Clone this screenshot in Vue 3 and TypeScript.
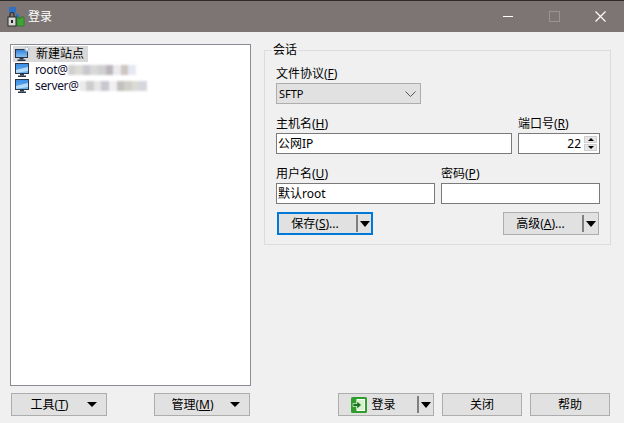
<script setup lang="ts">
const sites = [
  { name: 'root@', blur: ['#d0d0d0', '#dcdcd6', '#c8c8ce', '#d8d8d8', '#d0d0d0', '#bcb6bc', '#ebebee', '#cdc6c2', '#e6e9f3'] },
  { name: 'server@', blur: ['#ebebeb', '#cfcccc', '#e6e6e6', '#c8c8d0', '#f0f0f0', '#c4c0c0', '#d0d0c8', '#dadad6', '#d6d6de'] }
]
</script>

<template>
  <div class="window">
    <header class="titlebar">
      <svg class="app-icon" width="18" height="20" viewBox="0 0 18 20">
        <rect x="2" y="0" width="7" height="6" fill="#2f6fc4" />
        <path d="M9 6 L13 9 L9 12 Z" fill="#2f6fc4" />
        <path d="M10 10 h2 v2 l2 -1 v-1 h3 v9 h-7 Z" fill="#3fa535" stroke="#1d6e1a" stroke-width="0.6" />
        <rect x="1" y="10" width="8" height="9" fill="#d8d8d8" stroke="#2b2b2b" />
        <path d="M3 10 V7.5 a2 2 0 0 1 4 0 V10" fill="none" stroke="#2b2b2b" stroke-width="1.2" />
        <rect x="4" y="13" width="2" height="3" fill="#222" />
      </svg>
      <span class="title">登录</span>
      <div class="window-controls">
        <span class="ctl"><i class="min"></i></span>
        <span class="ctl"><i class="max"></i></span>
        <span class="ctl">
          <svg width="11" height="11" viewBox="0 0 11 11"><path d="M.5 .5 L10.5 10.5 M10.5 .5 L.5 10.5" stroke="#fff" stroke-width="1.2" /></svg>
        </span>
      </div>
    </header>

    <main class="content">
      <section class="left">
        <div class="tree">
          <div class="tree-row selected">
            <svg class="pc" width="16" height="16" viewBox="0 0 16 16">
              <defs>
                <linearGradient id="scr0" x1="0" y1="0" x2="0" y2="1">
                  <stop offset="0" stop-color="#2f7fd8" />
                  <stop offset="1" stop-color="#8cc4f2" />
                </linearGradient>
              </defs>
              <rect x="1.5" y="3.5" width="12" height="8" fill="url(#scr0)" stroke="#2a3547" />
              <rect x="5.5" y="12" width="4" height="1.5" fill="#2a3547" />
              <rect x="3.5" y="13.5" width="8" height="1.5" fill="#2a3547" />
              <circle cx="13" cy="3" r="2" fill="#eef2f8" stroke="#a9bbd0" stroke-width="1.4" stroke-dasharray="1.4 .7" />
            </svg>
            <span class="new-site">新建站点</span>
          </div>
          <div v-for="s in sites" :key="s.name" class="tree-row">
            <svg class="pc" width="16" height="16" viewBox="0 0 16 16">
              <defs>
                <linearGradient id="scr1" x1="0" y1="0" x2="0" y2="1">
                  <stop offset="0" stop-color="#3b8ee6" />
                  <stop offset="1" stop-color="#6db2ee" />
                </linearGradient>
              </defs>
              <rect x="1.5" y="1.5" width="13" height="10" fill="url(#scr1)" stroke="#2a3547" />
              <path d="M2 8 L14 5 V9 L2 11 Z" fill="#b5dbf8" />
              <rect x="6" y="12" width="4" height="1.5" fill="#2a3547" />
              <rect x="4" y="13.5" width="8" height="1.5" fill="#2a3547" />
            </svg>
            <span class="site">{{ s.name }}</span>
            <span class="mosaic">
              <i v-for="(c, i) in s.blur" :key="i" :style="{ background: c }"></i>
            </span>
          </div>
        </div>
        <div class="left-actions">
          <button class="btn wide"><span class="grow">工具(<u>T</u>)</span><i class="arrow"></i></button>
          <button class="btn wide"><span class="grow">管理(<u>M</u>)</span><i class="arrow"></i></button>
        </div>
      </section>

      <section class="right">
        <fieldset class="session">
          <legend>会话</legend>
          <div class="field protocol">
            <label>文件协议(<u>F</u>)</label>
            <div class="select">
              <span>SFTP</span>
              <svg width="11" height="6" viewBox="0 0 11 6"><path d="M.5 .5 L5.5 5.5 L10.5 .5" fill="none" stroke="#555" /></svg>
            </div>
          </div>
          <div class="row host-row">
            <div class="field">
              <label>主机名(<u>H</u>)</label>
              <div class="input">公网IP</div>
            </div>
            <div class="field">
              <label>端口号(<u>R</u>)</label>
              <div class="input port">
                <span>22</span>
                <span class="spin">
                  <b><i class="up"></i></b>
                  <b><i class="down"></i></b>
                </span>
              </div>
            </div>
          </div>
          <div class="row user-row">
            <div class="field">
              <label>用户名(<u>U</u>)</label>
              <div class="input">默认root</div>
            </div>
            <div class="field">
              <label>密码(<u>P</u>)</label>
              <div class="input"></div>
            </div>
          </div>
          <div class="session-actions">
            <button class="btn wide split focused"><span class="grow">保存(<u>S</u>)...</span><em></em><i class="arrow"></i></button>
            <button class="btn wide split"><span class="grow">高级(<u>A</u>)...</span><em></em><i class="arrow"></i></button>
          </div>
        </fieldset>
        <div class="right-actions">
          <button class="btn login split">
            <span class="grow login-label">
              <svg width="16" height="16" viewBox="0 0 16 16">
                <rect width="16" height="16" rx="1.5" fill="#2f9e2b" />
                <rect x="6" y="2.5" width="7.5" height="11" fill="#d8f2cf" stroke="#fff" />
                <path d="M2 6.5 H6 V4 L10.5 8 L6 12 V9.5 H2 Z" fill="#17781a" stroke="#fff" stroke-width=".6" />
              </svg>
              登录
            </span>
            <em></em><i class="arrow"></i>
          </button>
          <button class="btn plain">关闭</button>
          <button class="btn plain">帮助</button>
        </div>
      </section>
    </main>
  </div>
</template>

<style scoped>
.window {
  width: 624px;
  height: 423px;
  display: flex;
  flex-direction: column;
  background: #f0f0f0;
  color: #000;
  font: 12px/16px "Noto Sans", "Noto Sans CJK SC", sans-serif;
  overflow: hidden;
}
.titlebar {
  box-sizing: border-box;
  height: 32px;
  flex: none;
  display: flex;
  align-items: center;
  border-top: 1px solid #2e2b2a;
  background: #7c7573;
  color: #fff;
  padding-left: 7px;
}
.app-icon { flex: none; }
.title { margin-left: 3px; }
.window-controls {
  margin-left: auto;
  display: flex;
  padding-right: 1px;
}
.ctl {
  width: 46px;
  height: 31px;
  display: flex;
  align-items: center;
  justify-content: center;
}
.min { width: 10px; height: 1px; background: #fff; }
.max { width: 9px; height: 9px; border: 1px solid #9a9492; }
.content {
  flex: 1;
  display: flex;
  padding: 12px 13px 7px 10px;
  gap: 13px;
  min-height: 0;
}
.left {
  width: 241px;
  flex: none;
  display: flex;
  flex-direction: column;
}
.tree {
  flex: 1;
  background: #fff;
  border: 1px solid #8b8b96;
  padding: 1px 2px;
}
.tree-row {
  height: 16px;
  display: flex;
  align-items: center;
  padding-left: 1px;
}
.pc { flex: none; margin-right: 5px; }
.selected {
  width: fit-content;
  background: #d9d9d9;
  padding-right: 4px;
}
.new-site { margin-left: 1px; }
.site { color: #101030; letter-spacing: -0.35px; }
.mosaic {
  display: flex;
  height: 10px;
  filter: blur(1px);
}
.mosaic i { width: 7.6px; height: 10px; }
.left-actions {
  margin-top: 7px;
  display: flex;
  justify-content: space-between;
  padding: 0 1px;
}
.btn {
  box-sizing: border-box;
  height: 23px;
  display: flex;
  align-items: center;
  background: #e1e1e1;
  border: 1px solid #adadad;
  padding: 0;
  font: inherit;
  color: inherit;
}
.wide { width: 96px; padding-right: 9px; }
.grow { flex: 1; text-align: center; }
.arrow {
  flex: none;
  width: 0;
  height: 0;
  border-left: 5px solid transparent;
  border-right: 5px solid transparent;
  border-top: 5px solid #000;
}
.split { padding-right: 2px; }
.split .grow { padding-right: 5px; }
.split .arrow {
  border-left-width: 5.5px;
  border-right-width: 5.5px;
  border-top-width: 6px;
}
.split em {
  flex: none;
  width: 2px;
  height: 17px;
  background: #7f7f7f;
  margin-right: 2px;
}
.focused {
  border: 2px solid #0078d7;
  padding-right: 1px;
}
.right {
  flex: 1;
  display: flex;
  flex-direction: column;
  min-width: 0;
}
.session {
  box-sizing: border-box;
  height: 203px;
  margin: -2px 0 0;
  padding: 9px 11px 0 11px;
  border: 1px solid #dcdcdc;
  min-width: 0;
}
.session legend {
  padding: 0 1px;
  margin-left: -4px;
  height: 16px;
}
.field { display: flex; flex-direction: column; min-width: 0; }
.field label { height: 17px; line-height: 16px; }
.select {
  box-sizing: border-box;
  width: 145px;
  height: 21px;
  display: flex;
  align-items: center;
  justify-content: space-between;
  padding: 0 4px 0 2px;
  background: #e1e1e1;
  border: 1px solid #adadad;
  font-size: 11px;
}
.protocol { margin-top: -1px; }
.row { display: grid; column-gap: 6px; margin-top: 12px; }
.host-row { grid-template-columns: 236px 82px; }
.user-row { grid-template-columns: 159px 159px; }
.input {
  box-sizing: border-box;
  height: 21px;
  line-height: 19px;
  border: 1px solid #7a7a7a;
  background: #fff;
  padding: 0 1px;
}
.port {
  display: flex;
  justify-content: flex-end;
  align-items: center;
  gap: 3px;
  padding-right: 2px;
}
.spin { display: flex; flex-direction: column; gap: 1px; }
.spin b {
  width: 13px;
  height: 7px;
  display: flex;
  align-items: center;
  justify-content: center;
  background: #e6e6e6;
  border: 1px solid #cfcfcf;
  box-sizing: border-box;
}
.up { border: 3px solid transparent; border-top: 0; border-bottom: 3px solid #000; }
.down { border: 3px solid transparent; border-bottom: 0; border-top: 3px solid #000; }
.session-actions {
  display: flex;
  justify-content: space-between;
  margin-top: 8px;
  padding: 0 0 0 1px;
}
.right-actions {
  margin-top: auto;
  display: flex;
  justify-content: flex-end;
  gap: 8px;
  padding-right: 1px;
}
.login { width: 96px; }
.split .login-label {
  display: flex;
  align-items: center;
  justify-content: center;
  gap: 4px;
  padding-right: 9px;
}
.plain { width: 80px; justify-content: center; }
</style>

<style>
html, body { margin: 0; overflow: hidden; }
</style>
